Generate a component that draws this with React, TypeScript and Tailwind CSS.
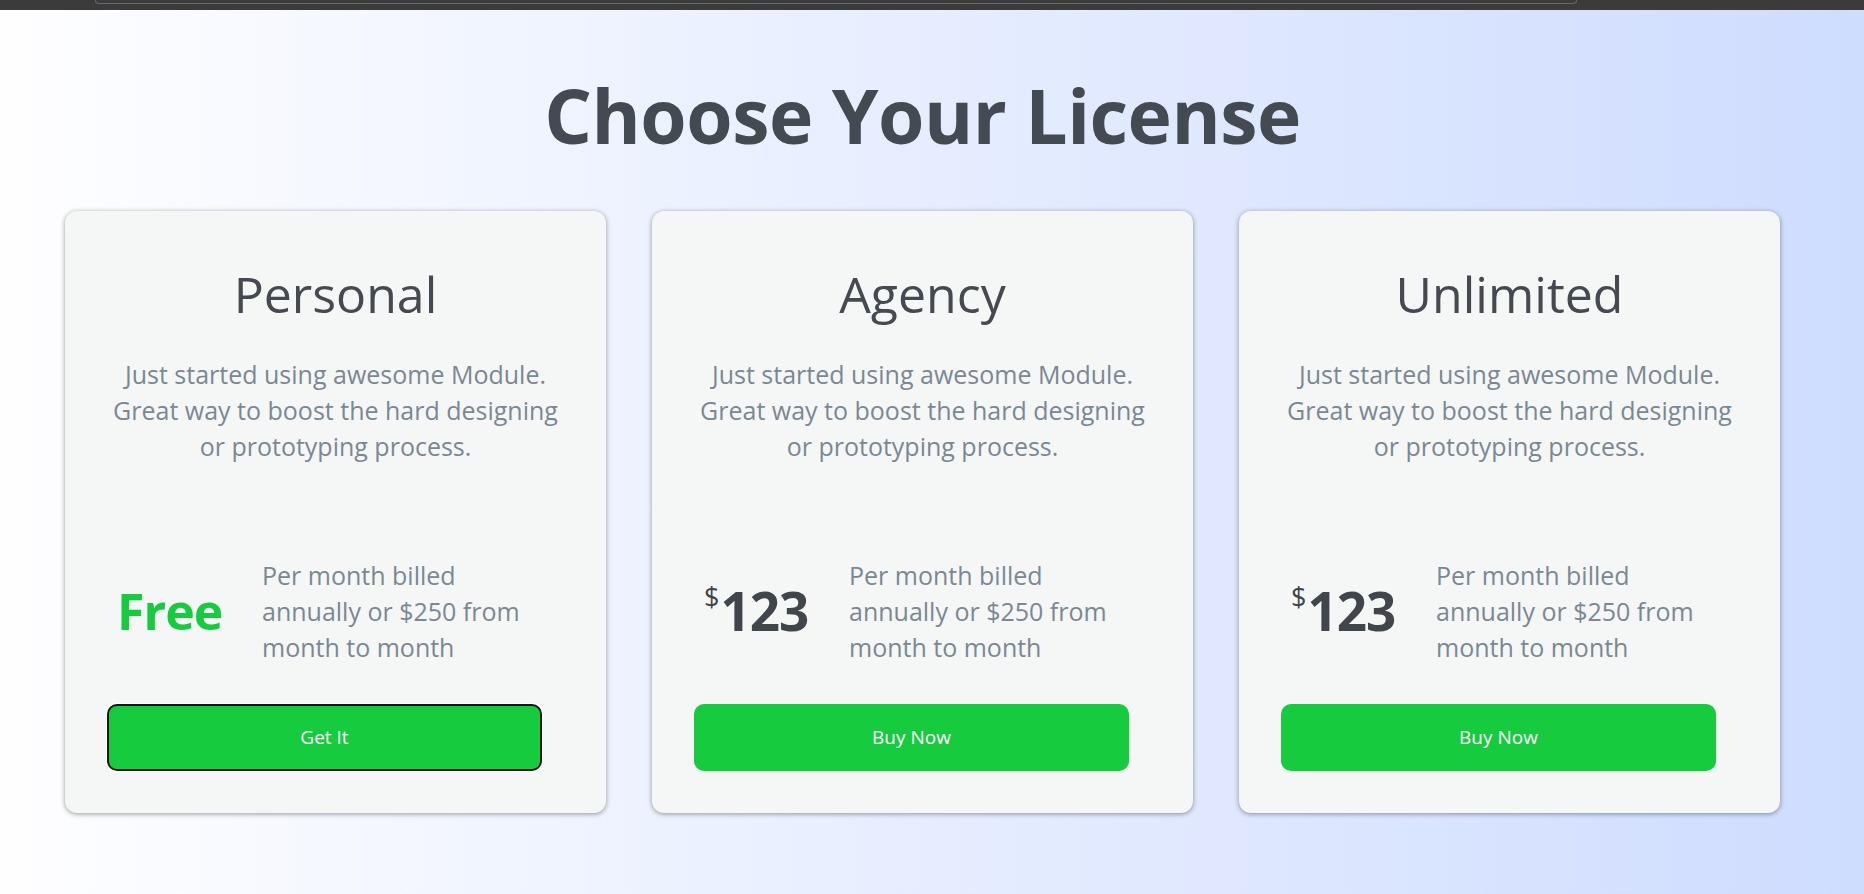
import React from 'react';

type Plan = {
    name: string;
    price: string | null;
    cta: string;
    focused?: boolean;
};

const plans: Plan[] = [
    { name: 'Personal', price: null, cta: 'Get It', focused: true },
    { name: 'Agency', price: '123', cta: 'Buy Now' },
    { name: 'Unlimited', price: '123', cta: 'Buy Now' },
];

const PlanCard: React.FC<{ plan: Plan }> = ({ plan }) => {
    return (
        <div className="w-[541px] h-[602px] bg-[#f4f7f6] rounded-[12px] shadow-[0_1px_5px_rgba(0,0,0,0.4)] flex flex-col pt-[53px] pb-[42px]">
            <h2 className="text-center text-[50px] leading-[60px] font-medium text-[#454a51]">{plan.name}</h2>
            <p className="mt-[32px] mx-auto w-[470px] text-center text-[25px] leading-[36px] text-[#7a8894]">
                Just started using awesome Module. Great way to boost the hard designing or prototyping process.
            </p>
            <div className="mt-auto flex items-center pl-[52px]">
                <div className="w-[145px] shrink-0">
                    {plan.price ? (
                        <div className="flex items-start text-[#41464d]">
                            <span className="text-[27px] leading-none mt-[0px] mr-[1px]">$</span>
                            <span className="text-[53px] leading-[56px] font-bold tracking-[-1px]">{plan.price}</span>
                        </div>
                    ) : (
                        <span className="text-[50px] leading-[56px] font-bold text-[#17cb3f] tracking-[-1px]">Free</span>
                    )}
                </div>
                <p className="w-[280px] text-[25px] leading-[36px] text-[#7a8894]">
                    Per month billed annually or $250 from month to month
                </p>
            </div>
            <button
                className={
                    plan.focused
                        ? 'mt-[39px] ml-[42px] w-[435px] h-[67px] rounded-[10px] bg-[#17cb3f] text-white text-[19px] border-2 border-[#161616] shadow-[0_0_0_1px_#ffffff]'
                        : 'mt-[39px] ml-[42px] w-[435px] h-[67px] rounded-[10px] bg-[#17cb3f] text-white text-[19px]'
                }
            >
                {plan.cta}
            </button>
        </div>
    );
};

const App: React.FC = () => {
    return (
        <div className="w-[1864px] h-[894px] overflow-hidden font-['Open_Sans',sans-serif] bg-linear-to-r from-[#fefeff] to-[#cedcfe]">
            <div className="h-[10px] bg-[#3b3b3b]">
                <div className="ml-[95px] w-[1482px] h-[4px] border-b border-x border-[#6a6a6a] rounded-b-[6px]" />
            </div>
            <h1 className="mt-[57px] pl-[65px] pr-[84px] text-center text-[75px] leading-[96px] font-bold text-[#444a52] tracking-[-0.5px]">
                Choose Your License
            </h1>
            <div className="mt-[48px] pl-[65px] pr-[84px] flex justify-between">
                {plans.map(plan => (
                    <PlanCard key={plan.name} plan={plan} />
                ))}
            </div>
        </div>
    );
};

export default App;
